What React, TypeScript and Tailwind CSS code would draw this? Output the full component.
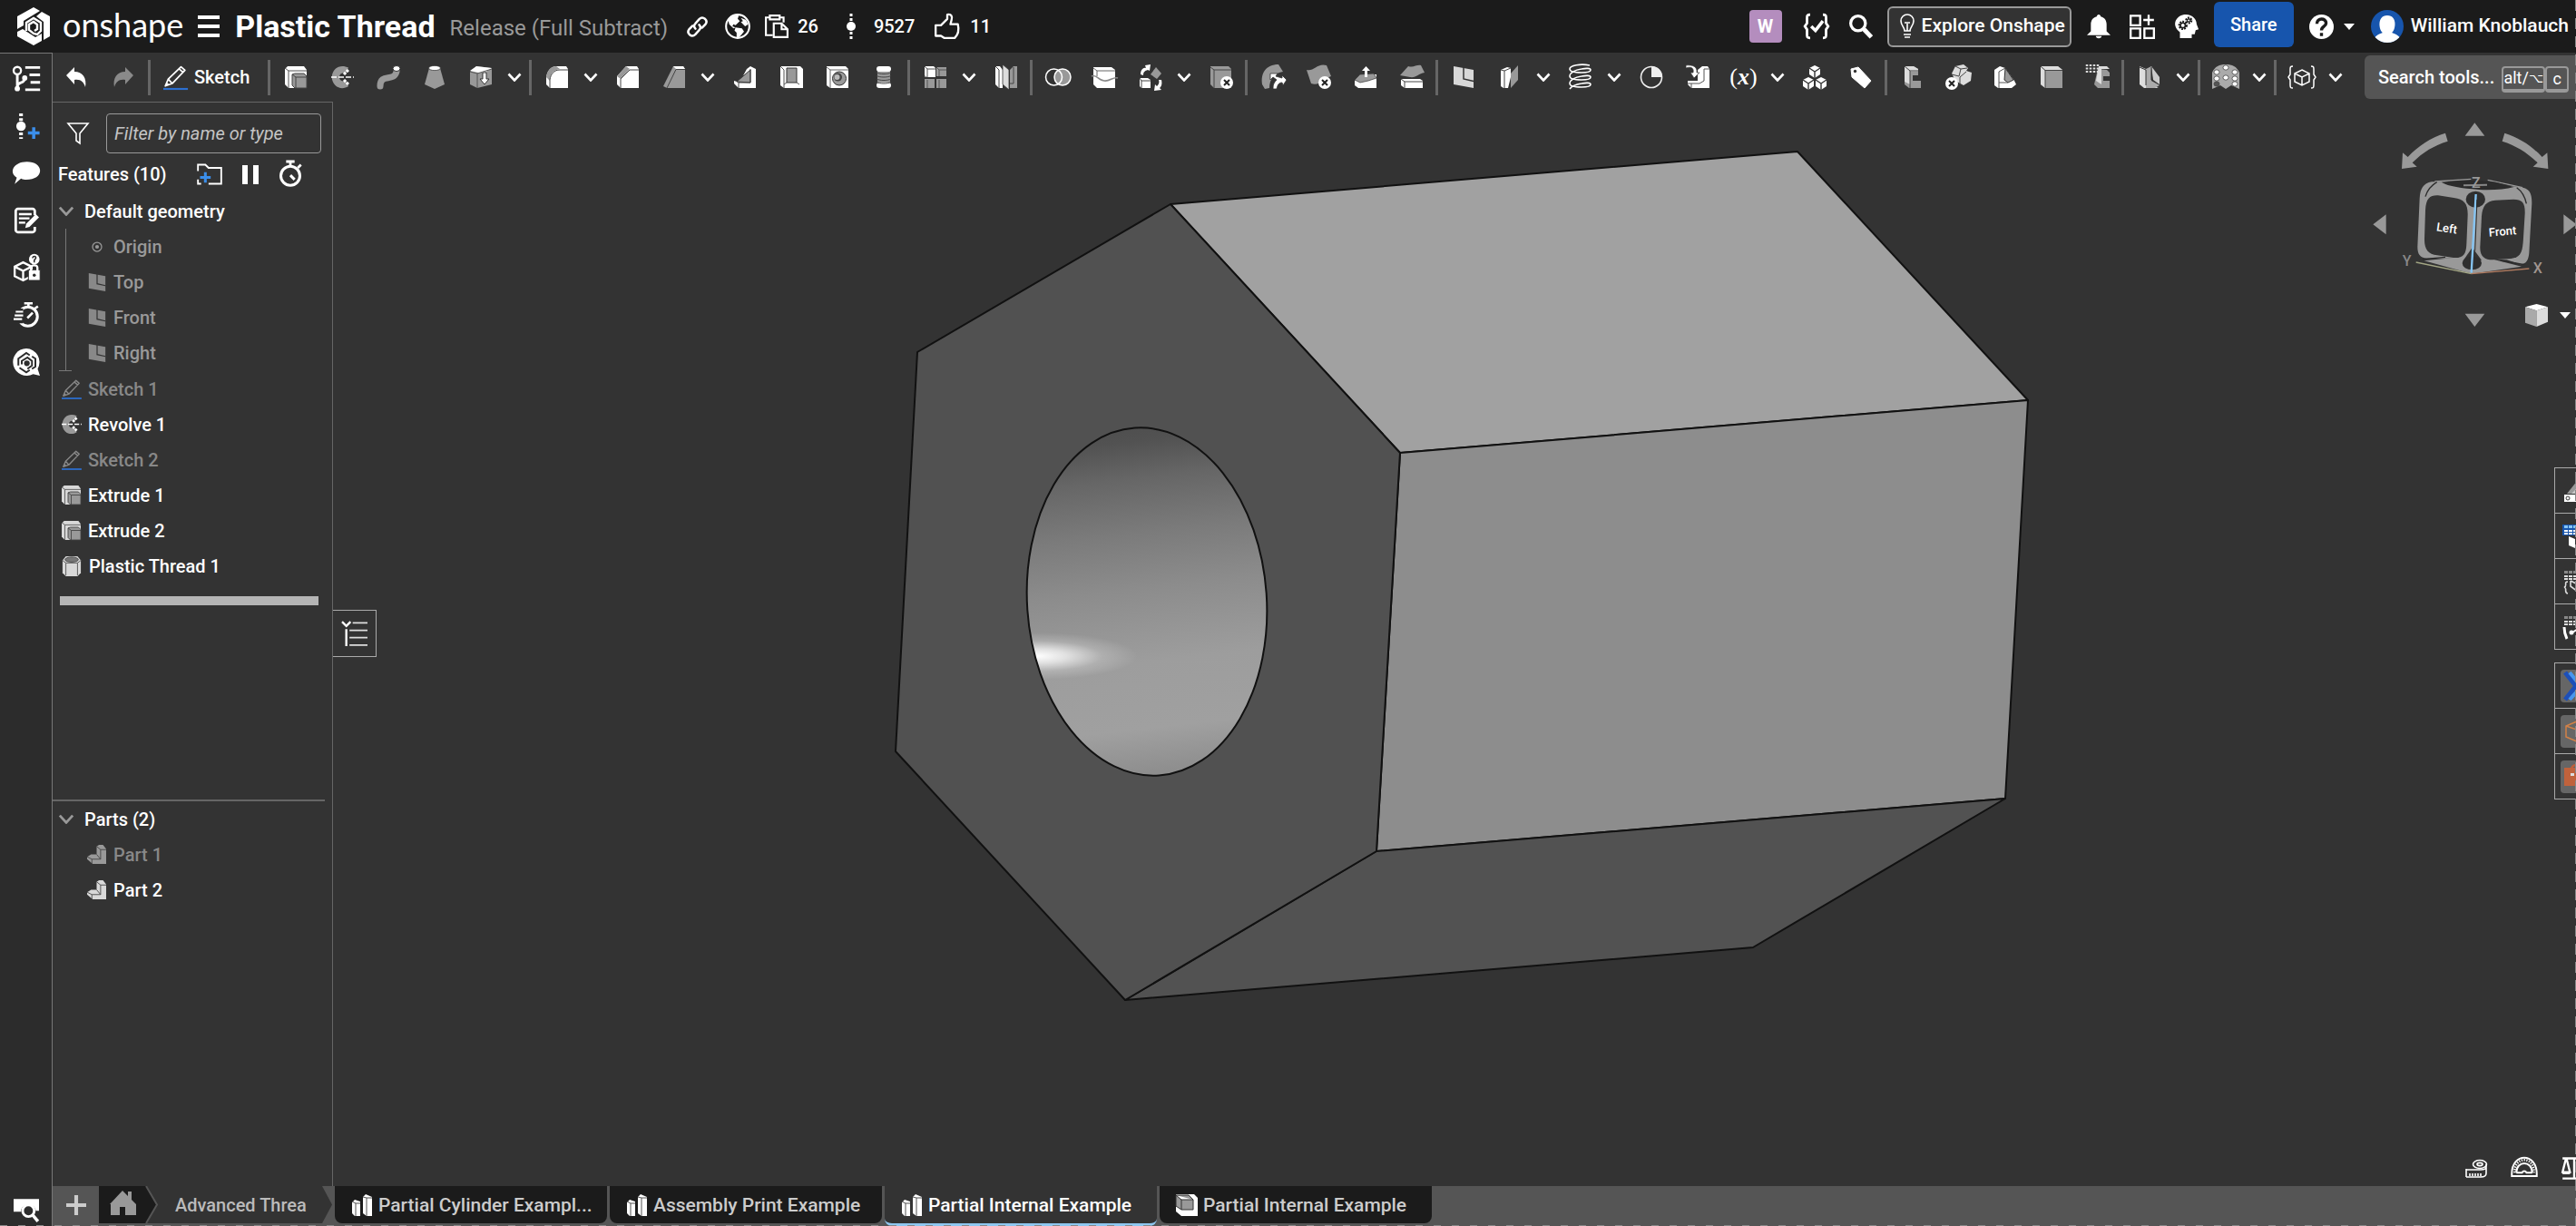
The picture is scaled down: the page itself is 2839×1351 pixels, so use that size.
import { useState } from 'react';
import type { ReactNode } from 'react';

type Tool = { label: string; icon: ReactNode; menu?: boolean };
type FeatureItem = { name: string; icon: ReactNode; dim?: boolean };

function Icon({ children, className = 'size-6' }: { children: ReactNode; className?: string }) {
  return (
    <svg viewBox="0 0 24 24" fill="none" aria-hidden="true" className={`shrink-0 overflow-visible ${className}`}>
      {children}
    </svg>
  );
}

const Extrude = ({ face = '#fff', className }: { face?: string; className?: string }) => (
  <Icon className={className}>
    <path d="M0 3L3 0h18l3 4v20H4l-4-4z" fill={face} />
    <path d="M0 2l4 3h20M4 5v19" stroke="#555" />
    <path d="M8 9l3-1h10l3 3v13H11l-3-3z" fill="#999" stroke="#444" />
    <path d="M8 9l4 3h12M12 12v12" stroke="#444" />
  </Icon>
);

const Revolve = ({ className }: { className?: string }) => (
  <Icon className={className}>
    <path d="M19 1.500C14-1 8-.5 4.500 3-.5 8-.5 16 4.500 21c4 4 10 4 14.500 1l-3.500-6.500c-2 1.500-4 1-5.500-.5-1.500-1.700-1.500-4.300 0-6 1.500-1.500 3.500-2 5.500-.5z" fill="#999" />
    <path d="M14 9l5-5M14 15l5 5" stroke="#fff" strokeWidth="3" strokeDasharray="3 1" />
    <path d="M0 12h25" stroke="#fff" strokeWidth="1.500" strokeDasharray="6 2" />
  </Icon>
);

const Pencil = ({ color = '#fff', className }: { color?: string; className?: string }) => (
  <Icon className={className}>
    <path d="M2 21L5 14 18 1.500l4 3.500L9 18.500zM5 14l4 4.500M16 3.500L20 7M2 21l3-2.500" stroke={color} strokeWidth="1.600" strokeLinejoin="round" />
    <path d="M0 24h25" stroke="#2c6fd0" strokeWidth="2" />
  </Icon>
);

const PlaneIcon = ({ color, className }: { color: string; className?: string }) => (
  <Icon className={className}>
    <path d="M1 0l22 4v20L1 20z" fill={color} />
    <path d="M12 1v13l11 2.500" stroke="#333" strokeWidth="1.500" />
  </Icon>
);

const PartIcon = ({ color }: { color: string }) => (
  <Icon className="size-[21px]">
    <path d="M0 15l5-3h7V2l3-2h5l4 5v19H7l-7-6z" fill={color} />
    <path d="M0 15l6 3h11V6l-5-4M6 18v6M17 6h7M12 12l5 6" stroke="#444" />
  </Icon>
);

const ThreadFeature = () => (
  <Icon className="size-[22px]">
    <path d="M1 5l4-5h14l4 5v15l-4 4H5l-4-4z" fill="#d8d8d8" />
    <ellipse cx="12" cy="4" rx="8" ry="3" fill="#777" stroke="#444" />
    <path d="M5 8v15M19 8v15M1 5l4 3h14l4-3" stroke="#555" />
  </Icon>
);

const Chevron = ({ className = 'w-4 h-3', color = '#fff' }: { className?: string; color?: string }) => (
  <svg viewBox="0 0 16 10" fill="none" aria-hidden="true" className={`shrink-0 ${className}`}>
    <path d="M1.500 1.500L8 8.500l6.500-7" stroke={color} strokeWidth="2.600" />
  </svg>
);

const crossBadge = (x: number, y: number) => (
  <g>
    <circle cx={x} cy={y} r="7" fill="#fff" />
    <path d={`M${x - 3} ${y - 3}l6 6m0-6l-6 6`} stroke="#222" strokeWidth="2" />
  </g>
);

const cube = (x: number, y: number, s: number, key?: number) => (
  <g key={key} transform={`translate(${x} ${y}) scale(${s})`}>
    <path d="M6 0l6 3v7l-6 4-6-4V3z" fill="#fff" />
    <path d="M0 3l6 4 6-4M6 7v7" stroke="#333" strokeWidth="1.400" />
  </g>
);

const GROUPS: Tool[][] = [
  [
    { label: 'Extrude', icon: <Extrude /> },
    { label: 'Revolve', icon: <Revolve /> },
    {
      label: 'Sweep',
      icon: (
        <Icon>
          <path d="M3 22C3 7 18 18 21 6" stroke="#999" strokeWidth="7" strokeLinecap="round" />
          <ellipse cx="21" cy="2.500" rx="4" ry="3" fill="#fff" stroke="#333" />
        </Icon>
      ),
    },
    {
      label: 'Loft',
      icon: (
        <Icon>
          <path d="M6 2h12l5 18-11 5-11-5z" fill="#999" />
          <ellipse cx="12" cy="2" rx="6.500" ry="2.600" fill="#fff" stroke="#333" strokeWidth=".7" />
        </Icon>
      ),
    },
    {
      label: 'Thicken',
      icon: (
        <Icon>
          <path d="M0 6l7-6 17 2v18L8 24l-8-4z" fill="#999" />
          <path d="M0 5l7-5 17 2-8 5H9z" fill="#fff" />
          <path d="M0 6l8 2 16-5M8 8v16" stroke="#555" />
          <path d="M14 7v7h-3l5 6 5-6h-3V7z" fill="#fff" stroke="#333" />
        </Icon>
      ),
      menu: true,
    },
  ],
  [
    {
      label: 'Fillet',
      icon: (
        <Icon>
          <path d="M0 12C1 5 5 0 11 0h11l2 3v21H4l-4-4z" fill="#fff" />
          <path d="M0 12C1 5 5 0 11 0l4 3C8 4 4 8 4 16z" fill="#999" />
          <path d="M4 24v-9C5 8 9 4 15 4h9" stroke="#444" />
        </Icon>
      ),
      menu: true,
    },
    {
      label: 'Chamfer',
      icon: (
        <Icon>
          <path d="M0 11L10 0h12l2 3v21H4l-4-4z" fill="#fff" />
          <path d="M0 11L10 0l4 3L4 14z" fill="#999" />
          <path d="M4 24V14L14 4h10" stroke="#444" />
        </Icon>
      ),
    },
    {
      label: 'Draft',
      icon: (
        <Icon>
          <path d="M0 22L11 0h11l2 3v21H4z" fill="#999" />
          <path d="M11 0h11l2 3H14z" fill="#fff" />
          <path d="M4 24L14 3.500h10" stroke="#444" />
        </Icon>
      ),
      menu: true,
    },
    {
      label: 'Rib',
      icon: (
        <Icon>
          <path d="M14 3l4-3 6 3v21H5l-5-5v-3l6 2z" fill="#fff" />
          <path d="M3 17L18 4v14z" fill="#999" stroke="#333" />
          <path d="M18 3v15H5v6" stroke="#444" />
        </Icon>
      ),
    },
    {
      label: 'Shell',
      icon: (
        <Icon>
          <path d="M0 0h22l3 3v21H4l-4-3z" fill="#fff" />
          <path d="M7 2h11v16H7z" fill="#999" stroke="#333" />
          <path d="M0 0l4 4v20M18 18l3 2M7 18l-3 2" stroke="#555" />
        </Icon>
      ),
    },
    {
      label: 'Hole',
      icon: (
        <Icon>
          <path d="M0 0h21l3 3v21H4l-4-3z" fill="#fff" />
          <path d="M0 1l4 3h20M4 4v20" stroke="#666" />
          <circle cx="14" cy="13.500" r="7.500" fill="#999" stroke="#333" />
          <circle cx="12.500" cy="12" r="4.500" fill="#444" />
          <circle cx="11.500" cy="12" r="3" fill="#bbb" />
        </Icon>
      ),
    },
    {
      label: 'External thread',
      icon: (
        <Icon>
          <path d="M5 5h14v14H5z" fill="#999" />
          <rect x="4" width="16" height="6" rx="3" fill="#fff" />
          <rect x="4" y="18" width="16" height="6" rx="3" fill="#fff" />
          <path d="M4 7c4 2 12 2 16 0M4 10.500c4 2 12 2 16 0M4 14c4 2 12 2 16 0M4 17.500c4 2 12 2 16 0" stroke="#444" />
        </Icon>
      ),
    },
  ],
  [
    {
      label: 'Linear pattern',
      icon: (
        <Icon>
          <path d="M0 1h11v11H0zM13 1h11v10H13zM0 14h11v10H0zM13 14h11v10H13z" fill="#999" />
          <path d="M0 0h10l2 2v10H3L0 10z" fill="#fff" />
          <path d="M0 0l3 3h9M3 3v9M13 1l3 3h8M16 4v7M3 15v9M16 15v9" stroke="#555" />
        </Icon>
      ),
      menu: true,
    },
    {
      label: 'Mirror',
      icon: (
        <Icon>
          <path d="M0 0h5l3 4v20H4l-4-4z" fill="#fff" />
          <path d="M16 4l4-4h4v24h-8z" fill="#999" />
          <path d="M8-2l7 6v22l-7-6z" fill="#ddd" stroke="#333" strokeWidth=".8" />
          <path d="M0 0l4 4v20M20 1v18h-4" stroke="#444" />
        </Icon>
      ),
    },
  ],
  [
    {
      label: 'Boolean',
      icon: (
        <Icon>
          <circle cx="17" cy="12" r="9" fill="#999" />
          <circle cx="7.500" cy="12" r="9" stroke="#fff" strokeWidth="1.500" />
          <circle cx="17" cy="12" r="9" stroke="#fff" strokeWidth="1.500" />
        </Icon>
      ),
    },
    {
      label: 'Split',
      icon: (
        <Icon>
          <path d="M0 1h20l4 3v20H4l-4-4z" fill="#fff" />
          <path d="M0 2l4 3h20M4 5v6" stroke="#666" />
          <path d="M-2 11c5-3 8 5 14 5 6 1 10-5 15-3" stroke="#888" strokeWidth="1.600" />
        </Icon>
      ),
    },
    {
      label: 'Transform',
      icon: (
        <Icon>
          <path d="M0 13h9l3 2v9H2l-2-2z" fill="#fff" />
          <path d="M0 13l2 3h10M2 16v8" stroke="#444" />
          <path d="M18 1l6 7-5 6-7-5z" fill="#999" />
          <path d="M1 9C1 4 4 1 7 2l-1-3 6-1-1 7-2-1C6 5 4 6 4 10zM24 15c1 5 0 7-2 9l2 2-8 1 1-7 2 2c2-2 3-4 2-7z" fill="#fff" />
        </Icon>
      ),
      menu: true,
    },
    {
      label: 'Delete part',
      icon: (
        <Icon>
          <path d="M0 0h20l3 3v21H4l-4-4z" fill="#999" />
          <path d="M0 1l4 3h19M4 4v20" stroke="#444" />
          {crossBadge(18, 18)}
        </Icon>
      ),
    },
  ],
  [
    {
      label: 'Modify fillet',
      icon: (
        <Icon>
          <path d="M0 20C-2 8 4-2 18-2l5 8C14 7 8 14 8 24l-5 1z" fill="#999" />
          <path d="M9 8h8l-2 3 7 2v-3l5 5-4 6-1-3c-4 0-5 3-6 7h-4c0-5 1-7 4-10l-4-3-3 3z" fill="#fff" stroke="#333" strokeWidth=".8" />
        </Icon>
      ),
    },
    {
      label: 'Delete face',
      icon: (
        <Icon>
          <path d="M-2 4C6 6 10-4 20-1l5 12C17 14 12 22 3 19z" fill="#999" />
          {crossBadge(18, 18)}
        </Icon>
      ),
    },
    {
      label: 'Move face',
      icon: (
        <Icon>
          <path d="M0 16l6-7h18v15H4l-4-3z" fill="#fff" />
          <path d="M0 15l6-6 15-1 3 5-9 3-9 2z" fill="#999" stroke="#333" strokeWidth=".7" />
          <path d="M11 12V5H8l4.500-5L17 5h-3v7z" fill="#fff" />
        </Icon>
      ),
    },
    {
      label: 'Replace face',
      icon: (
        <Icon>
          <path d="M-1 10L8 0c6 2 9-2 14-1l4 8c-7 1-9 6-16 5z" fill="#999" />
          <path d="M0 14h21l3 2v8H4l-4-3z" fill="#fff" />
          <path d="M0 14l4 3h20M4 17v7" stroke="#444" />
        </Icon>
      ),
    },
  ],
  [
    { label: 'Plane', icon: <PlaneIcon color="#d8d8d8" /> },
    {
      label: 'Frame',
      icon: (
        <Icon>
          <path d="M2 4l7-3 4 1v10l-3 12H5l-3-2z" fill="#fff" />
          <path d="M2 4l4 1v19M6 5l7-3" stroke="#444" />
          <path d="M13 8l8-9v16l-8 9z" fill="#999" />
        </Icon>
      ),
      menu: true,
    },
    {
      label: 'Helix',
      icon: (
        <Icon>
          <path
            d="M22-1C12-3 0-1 0 3c0 3 6 4 13 4s10-1 10-3-5-2-10-1C6 4 0 7 0 11c0 3 6 4 13 4s10-1 10-3-5-2-10-1C6 12 0 15 0 19c0 3 6 4 13 4s10-1 10-3-5-2-10-1C7 20 2 22 0 25"
            stroke="#fff"
            strokeWidth="1.600"
          />
        </Icon>
      ),
      menu: true,
    },
    {
      label: 'Curve',
      icon: (
        <Icon>
          <circle cx="12" cy="12" r="11.500" stroke="#eee" strokeWidth="1.600" />
          <path d="M12 0v12h12C24 5 19 0 12 0z" fill="#eee" />
        </Icon>
      ),
    },
    {
      label: 'Import',
      icon: (
        <Icon>
          <path d="M12 4l5-4h6l2 3v21H5l-4-4v-4h11z" fill="#fff" />
          <path d="M25 3h-6v13l-5 3H1M5 24v-5" stroke="#555" />
          <path d="M-1-1c8-1 13 2 12 8h3l-6 6-4-6h3C8 2 5 0-1 2z" fill="#fff" stroke="#333" strokeWidth=".7" />
        </Icon>
      ),
    },
    {
      label: 'Variable',
      icon: (
        <span className="font-[Liberation_Serif,serif] text-[26px] leading-6 text-white">
          (<span className="font-bold italic">x</span>)
        </span>
      ),
      menu: true,
    },
    {
      label: 'Composite part',
      icon: (
        <Icon>
          {cube(6, -1, 1)}
          {cube(-1, 12, 1, 1)}
          {cube(13, 12, 1, 2)}
        </Icon>
      ),
    },
    {
      label: 'Tag',
      icon: (
        <Icon>
          <path d="M1 3l8-2 14 15-7 8L2 12z" fill="#fff" stroke="#fff" strokeLinejoin="round" />
          <circle cx="5.500" cy="5.500" r="1.700" fill="#333" />
        </Icon>
      ),
    },
  ],
  [
    {
      label: 'Sheet metal model',
      icon: (
        <Icon>
          <path d="M3 0h10l5 3v7h-6v6h9v8H8l-5-4z" fill="#999" />
          <path d="M3 0h10l5 3v3H9v14l-6-3z" fill="#ddd" />
          <path d="M3 0l6 5h9M9 5v19" stroke="#444" />
        </Icon>
      ),
    },
    {
      label: 'Delete bend',
      icon: (
        <Icon>
          <path d="M4 8l4-8 9-2 5 4-2 3 6 2-1 9-8 5-9-5z" fill="#ddd" />
          <path d="M8 0l6 3-2 8-8-2M14 3l7-1M20 6l-7 6v8" stroke="#444" />
          {crossBadge(4, 19)}
        </Icon>
      ),
    },
    {
      label: 'Flange',
      icon: (
        <Icon>
          <path d="M0 4l6-4 6 2 10 14 2 4-5 4H4l-4-3z" fill="#fff" />
          <path d="M12 2l9 13-6 3-4-3z" fill="#999" stroke="#333" />
          <path d="M5 24V6L12 2M5 18h10" stroke="#555" />
        </Icon>
      ),
    },
    {
      label: 'Finish sheet metal',
      icon: (
        <Icon>
          <path d="M0 0h19l5 4v20H5l-5-4z" fill="#999" />
          <path d="M0 0h19l5 4H5v20l-5-4z" fill="#ddd" />
          <path d="M0 0l5 4.500h19M5 4v20" stroke="#444" />
        </Icon>
      ),
    },
    {
      label: 'Flat pattern',
      icon: (
        <Icon>
          <path d="M12 3l10 1 3 3v4h-7v5h7v8H12l-4-4z" fill="#999" />
          <path d="M13 0h9l3 3h-9v17l-6-4z" fill="#ddd" />
          <path d="M0-2v10M4-2v10M8-2v10M12-2v10" stroke="#ddd" strokeWidth="2.500" strokeDasharray="2 1.500" />
        </Icon>
      ),
    },
  ],
  [
    {
      label: 'Bend relief',
      icon: (
        <Icon>
          <path d="M1 0l7 3v15l14 6H6l-5-4z" fill="#ddd" />
          <path d="M8 3l6-3v16l9 5-5 3H8z" fill="#aaa" />
          <path d="M14 0l9 12v8l-7-5z" fill="#ccc" />
          <path d="M1 1l7 3v17M14 1v14" stroke="#333" />
        </Icon>
      ),
      menu: true,
    },
  ],
  [
    {
      label: 'Lattice',
      icon: (
        <Icon>
          <path d="M-3 7C0 0 5-2 12-2s12 2 15 9v18l-9-4-6 4-6-4-9 4z" fill="#aaa" />
          {[-1, 9, 19].map((x, i) => (
            <g key={x} fill="#fff" stroke="#444" strokeWidth=".8">
              <rect x={x} y={i === 1 ? -1 : 4} width="6" height="5" rx="2.500" />
              <rect x={x} y={i === 1 ? 10 : 11} width="6" height="5" rx="2.500" />
              {i !== 1 && <rect x={x} y="17" width="6" height="5" rx="2.500" fill={i === 0 ? '#555' : '#fff'} />}
            </g>
          ))}
        </Icon>
      ),
      menu: true,
    },
  ],
  [
    {
      label: 'Custom feature',
      icon: (
        <Icon>
          <path d="M2 0C-1 0-1 1-1 4v5l-2 3 2 3v5c0 3 0 4 3 4M22 0c3 0 3 1 3 4v5l2 3-2 3v5c0 3 0 4-3 4M12 4l8 4v9l-8 4-8-4V8zM4 8l8 4 8-4M12 12v9" stroke="#fff" strokeWidth="1.500" />
        </Icon>
      ),
      menu: true,
    },
  ],
];

const GEOMETRY = ['Origin', 'Top', 'Front', 'Right'];

const FEATURES: FeatureItem[] = [
  { name: 'Sketch 1', icon: <Pencil color="#888" className="size-[21px]" />, dim: true },
  { name: 'Revolve 1', icon: <Revolve className="size-[21px]" /> },
  { name: 'Sketch 2', icon: <Pencil color="#888" className="size-[21px]" />, dim: true },
  { name: 'Extrude 1', icon: <Extrude face="#d8d8d8" className="size-[21px]" /> },
  { name: 'Extrude 2', icon: <Extrude face="#d8d8d8" className="size-[21px]" /> },
  { name: 'Plastic Thread 1', icon: <ThreadFeature /> },
];

const TABS = [
  { name: 'Partial Cylinder Exampl...', kind: 'studio' },
  { name: 'Assembly Print Example', kind: 'studio' },
  { name: 'Partial Internal Example', kind: 'studio' },
  { name: 'Partial Internal Example', kind: 'drawing' },
];

function Logo() {
  return (
    <svg viewBox="0 0 36 42" className="w-9 h-[42px]" fill="none" aria-hidden="true">
      <path d="M0 24V10L18 0l7 4L7 15v5zM27 5l9 5v22l-7 4V16l-8-6zM0 27l6-3 14 9 7-4v8l-9 5L0 32z" fill="#fff" />
      <path d="M10 26V17l8-5 8 5v9l-4 4-4-1-5-4v-6l5-3 4 3v5l-3 2" stroke="#fff" strokeWidth="2.400" />
    </svg>
  );
}

function VersionDots() {
  return (
    <svg viewBox="0 0 10 28" className="w-[10px] h-7" aria-hidden="true">
      <path d="M5 0v28" stroke="#fff" strokeWidth="3" strokeDasharray="3 2" />
      <circle cx="5" cy="14" r="5" fill="#fff" />
    </svg>
  );
}

function Header() {
  return (
    <header className="flex h-[58px] shrink-0 items-center bg-[#1b1b1b] pl-[19px] pr-2 text-white">
      <Logo />
      <span className="ml-[14px] -mt-1 font-[Lato,sans-serif] text-[36px] leading-10">onshape</span>
      <button aria-label="Main menu" className="ml-4 flex w-6 flex-col gap-[6px] py-2">
        <span className="h-1 bg-white" />
        <span className="h-1 bg-white" />
        <span className="h-1 bg-white" />
      </button>
      <h1 className="ml-[17px] text-[34px] leading-10 font-bold">Plastic Thread</h1>
      <span className="ml-4 mt-1 text-[24px] leading-8 text-[#999]">Release (Full Subtract)</span>
      <button aria-label="Copy link" className="ml-[20px]">
        <Icon className="size-[25px]">
          <g stroke="#fff" strokeWidth="2.400" strokeLinecap="round">
            <path d="M10 14c-2-2-1.500-4 0-5.500l4-4.500c4-4 10 1 6.500 5.500L17 13" />
            <path d="M14 10c2 2 1.500 4 0 5.500L10 20c-4 4-10-1-6.500-5.500L7 11" />
          </g>
        </Icon>
      </button>
      <button aria-label="Public document" className="ml-[18px]">
        <Icon className="size-7">
          <circle cx="12" cy="12" r="11" stroke="#fff" strokeWidth="1.800" />
          <path d="M3 6c3-4 7-5 10-4l-1 3 2 2-4 4-2-1-1 2 3 1-2 1-4-4zM10 13l6 1 2 3-5 6-2-1v-4l-2-2zM15 4l5 2 2 4-3 2-4-4 2-1z" fill="#fff" />
        </Icon>
      </button>
      <button className="ml-4 flex items-center gap-[10px] text-[20px] leading-6 font-medium">
        <Icon className="size-[26px]">
          <path d="M8 21H1V3h4M15 3h4v5M5 1h10v4H5z" stroke="#fff" strokeWidth="2" />
          <path d="M9 9h8l6 6v8H9zM17 9v6h6" stroke="#fff" strokeWidth="2" />
        </Icon>
        26
      </button>
      <button className="ml-[31px] flex items-center gap-[20px] text-[20px] leading-6 font-medium">
        <VersionDots />
        9527
      </button>
      <button className="ml-[22px] flex items-center gap-[11px] text-[20px] leading-6 font-medium">
        <Icon className="size-7">
          <path d="M1 11h5l6-6V1c4-1 5 2 4 5l-1 4h7c1 4 1 9-3 13H9l-3-2H1z" stroke="#fff" strokeWidth="2" strokeLinejoin="round" />
        </Icon>
        11
      </button>

      <div className="ml-auto flex items-center">
        <span className="flex size-9 items-center justify-center rounded-sm bg-[#b48dbe] text-[20px] font-bold">W</span>
        <button aria-label="Release management" className="ml-6">
          <Icon className="size-7">
            <path d="M6 1C3 1 3 2 3 4v5l-2 3 2 3v5c0 2 0 3 3 3M18 1c3 0 3 1 3 3v5l2 3-2 3v5c0 2 0 3-3 3" stroke="#fff" strokeWidth="2.400" />
            <path d="M7 12l4 4 7-9" stroke="#fff" strokeWidth="3" />
          </Icon>
        </button>
        <button aria-label="Search" className="ml-[22px]">
          <Icon className="size-[26px]">
            <circle cx="9" cy="9" r="7.500" stroke="#fff" strokeWidth="3" />
            <path d="M15 15l7.500 8" stroke="#fff" strokeWidth="4.500" />
          </Icon>
        </button>
        <button className="ml-4 flex h-[45px] items-center gap-2 rounded-md border-2 border-[#999] bg-[#333] pl-3 pr-[5px] text-[21px] font-medium">
          <svg viewBox="0 0 16 28" className="w-4 h-7" fill="none" aria-hidden="true">
            <path d="M5 19c0-4-4-6-4-11a7 7 0 0114 0c0 5-4 7-4 11zM8 19v-8M5 10h6M4 23h8M5 26h6" stroke="#fff" strokeWidth="1.600" />
          </svg>
          Explore Onshape
        </button>
        <button aria-label="Notifications" className="ml-[17px]">
          <Icon className="size-[26px]">
            <path d="M12 0c1 0 2 1 2 2 4 1 6 4 6 8v7l4 4H0l4-4v-7c0-4 2-7 6-8 0-1 1-2 2-2zM9 22h6c0 3-6 3-6 0z" fill="#fff" />
          </Icon>
        </button>
        <button aria-label="App store" className="ml-[21px]">
          <Icon className="size-[28px]">
            <path d="M1 2h9v9H1zM1 14h9v9H1zM14 14h9v9h-9zM18 1v10M13 6h10" stroke="#fff" strokeWidth="2" />
          </Icon>
        </button>
        <button aria-label="Learning center" className="ml-[21px]">
          <Icon className="size-[26px]">
            <path d="M12 0c7 0 11 5 11 10l2 5-3 1-1 4h-3v4H6v-6C-4 10 3 0 12 0z" fill="#fff" />
            <g stroke="#1b1b1b" strokeWidth="2.500" strokeDasharray="1.600 1">
              <circle cx="9" cy="11" r="3.500" />
              <circle cx="15" cy="6" r="2.500" />
            </g>
            <circle cx="9" cy="11" r="2.500" stroke="#1b1b1b" strokeWidth="1.500" />
            <circle cx="15" cy="6" r="1.500" stroke="#1b1b1b" />
          </Icon>
        </button>
        <button className="mb-1 ml-[18px] h-[50px] w-[88px] rounded-md bg-[#1755ad] text-[20px] font-medium">Share</button>
        <button aria-label="Help" className="ml-[17px] flex items-center gap-[11px]">
          <Icon className="size-[27px]">
            <circle cx="12" cy="12" r="12" fill="#fff" />
            <path d="M7.500 9c0-6 9-6 9-.5 0 3.500-4.500 3-4.500 7M12 18v3" stroke="#1b1b1b" strokeWidth="3" />
          </Icon>
          <svg viewBox="0 0 12 7" className="w-3 h-[7px]" aria-hidden="true"><path d="M0 0h12L6 7z" fill="#fff" /></svg>
        </button>
        <button className="ml-[18px] flex items-center gap-2 text-[21px] font-medium">
          <span className="size-9 overflow-hidden rounded-full bg-[#1755ad]">
            <svg viewBox="0 0 36 36" aria-hidden="true">
              <path d="M18 6c12 0 9 17 5 19 5 2 11 4 10 11H3c-1-7 5-9 10-11C9 23 6 6 18 6z" fill="#fff" />
            </svg>
          </span>
          William Knoblauch
        </button>
      </div>
    </header>
  );
}

function Toolbar() {
  return (
    <div role="toolbar" className="flex h-[54px] shrink-0 items-center bg-[#333]">
      <button aria-label="Undo" className="flex w-[51px] justify-center">
        <Icon>
          <path d="M1 10l9-9v5c9 0 14 7 12 17-2-6-5-9-12-8v5z" fill="#fff" />
        </Icon>
      </button>
      <button aria-label="Redo" className="flex w-[54px] justify-center">
        <Icon>
          <path d="M23 10l-9-9v5C5 6 0 13 2 23c2-6 5-9 12-8v5z" fill="#8a8a8a" />
        </Icon>
      </button>
      <span className="mr-[2px] h-[39px] w-[3px] shrink-0 bg-[#666]" />
      <button className="flex w-[126px] items-center gap-2 pl-3 text-[20px] font-medium text-white">
        <Pencil className="size-[26px]" />
        Sketch
      </button>
      {GROUPS.map((group, g) => (
        <div key={g} className="flex items-center">
          <span className="mx-[1px] mr-[2px] h-[39px] w-[3px] shrink-0 bg-[#666]" />
          {group.map((tool) => (
            <div key={tool.label} className="flex items-center">
              <button aria-label={tool.label} className="flex w-[51px] justify-center">{tool.icon}</button>
              {tool.menu && (
                <button aria-label={`${tool.label} menu`} className="flex h-6 w-[27px] items-center justify-center pr-1">
                  <Chevron className="w-4 h-[10px]" />
                </button>
              )}
            </div>
          ))}
        </div>
      ))}
      <button className="ml-auto flex h-12 w-[233px] shrink-0 items-center rounded-l-md bg-[#555] pl-[15px] text-[20px] font-medium text-white">
        <span>Search tools...</span>
        <span className="ml-2 mt-1 flex text-[18px] leading-6 font-normal">
          <kbd className="flex h-[29px] w-12 items-center justify-center rounded-sm border-2 border-b-4 border-[#999] font-[Roboto,DejaVu_Sans,sans-serif]">
            alt/<span className="text-[14px]">⌥</span>
          </kbd>
          <kbd className="h-[29px] w-[26px] rounded-sm border-2 border-b-4 border-[#999] text-center font-[Roboto,sans-serif]">c</kbd>
        </span>
      </button>
    </div>
  );
}

const stopwatch = (
  <>
    <circle cx="12" cy="13.500" r="9" stroke="#fff" strokeWidth="2.600" />
    <path d="M12 4V1M8 0h8M19 6l3-3" stroke="#fff" strokeWidth="2.400" />
  </>
);

const RAIL: { label: string; icon: ReactNode }[] = [
  {
    label: 'Feature list',
    icon: (
      <Icon className="size-7">
        <circle cx="3.500" cy="5" r="3.500" stroke="#fff" strokeWidth="2" />
        <path d="M3.500 9v12M3.500 20c0-5 7-2 7-8" stroke="#fff" strokeWidth="2.500" />
        <circle cx="3.500" cy="22" r="2.500" fill="#fff" />
        <circle cx="10.500" cy="12" r="2.500" fill="#fff" />
        <path d="M11 2h14M15 9h10M16 16h9M11 23h14" stroke="#fff" strokeWidth="2.500" />
      </Icon>
    ),
  },
  {
    label: 'Versions and history',
    icon: (
      <Icon className="size-7">
        <path d="M7 0v24" stroke="#fff" strokeWidth="3.500" strokeDasharray="2.500 2" />
        <circle cx="7" cy="12" r="4.500" fill="#fff" />
        <path d="M19 13v11M13.500 18.500h11" stroke="#3b8eea" strokeWidth="3" />
      </Icon>
    ),
  },
  {
    label: 'Comments',
    icon: (
      <Icon className="size-7">
        <path d="M12.500 1C20 1 25 4.500 25 9.500S20 18 12 18c-2 0-3 0-5-1l-6 5 2-6c-8-5-3-15 9.500-15z" fill="#fff" />
      </Icon>
    ),
  },
  {
    label: 'Notes',
    icon: (
      <Icon className="size-7">
        <path d="M20 7V3c0-1-1-2-2-2H4C3 1 2 2 2 3v18c0 1 1 2 2 2h14c1 0 2-1 2-2v-3" stroke="#fff" strokeWidth="2.400" />
        <path d="M5 6h12M5 10h10M5 14h6" stroke="#fff" strokeWidth="2" />
        <path d="M11 19l1-4L21 6l3 3-9 9z" fill="#fff" />
      </Icon>
    ),
  },
  {
    label: 'Permissions',
    icon: (
      <Icon className="size-7">
        <path d="M1 11l8-4 8 4v9l-8 4-8-4zM1 11l8 4 8-4M9 15v9" stroke="#fff" strokeWidth="2" />
        <circle cx="19.500" cy="4" r="5" fill="#fff" />
        <path d="M18 3c0-2.500 3.500-2 3 0l-1.500 2v2" stroke="#2c2c2c" strokeWidth="1.300" />
        <path d="M14 14h11v10H14z" fill="#fff" stroke="#2c2c2c" strokeWidth=".8" />
        <path d="M16.500 15v-3c0-3 6-3 6 0v3" stroke="#fff" strokeWidth="2" />
        <circle cx="19.500" cy="19" r="1.500" fill="#2c2c2c" />
      </Icon>
    ),
  },
  {
    label: 'Performance',
    icon: (
      <Icon className="size-7">
        <circle cx="13.500" cy="13.500" r="9" stroke="#fff" strokeWidth="2.600" />
        <path d="M-1 8h10M0 11.500h8M-1 15h8M0 18h9" stroke="#2c2c2c" strokeWidth="4" />
        <path d="M2 9h7M1 12.500h8M0 16h8" stroke="#fff" strokeWidth="1.800" />
        <path d="M10 1h8M14 1v3M20 6l3-2M13 15l5-5" stroke="#fff" strokeWidth="2.200" />
      </Icon>
    ),
  },
  {
    label: 'Onshape chat',
    icon: (
      <Icon className="size-[30px]">
        <path d="M12 0a12 12 0 0110 18l2 6-6-1.500A12 12 0 1112 0z" fill="#fff" />
        <path d="M5 15V9l7-5 3 2M17 7l3 2v7l-3 2M6 17l6 4 3-2M8 14v-3l5-3 4 3v4l-4 3" stroke="#2c2c2c" strokeWidth="1.600" />
        <circle cx="12.500" cy="13" r="2.500" fill="#2c2c2c" />
      </Icon>
    ),
  },
];

function Rail() {
  return (
    <nav aria-label="Panels" className="flex w-[58px] shrink-0 flex-col items-center border-t border-r border-[#777] bg-[#2c2c2c]">
      {RAIL.map((item, i) => (
        <button
          key={item.label}
          aria-label={item.label}
          className={i === 0 ? 'flex h-[54px] items-center' : 'flex h-[52px] items-center'}
        >
          {item.icon}
        </button>
      ))}
      <button aria-label="Search document" className="mt-auto mb-1">
        <Icon className="size-7">
          <path d="M0 2h24v11h-3c-1-8-14-8-14 1H0z" fill="#fff" />
          <circle cx="14" cy="13" r="5.500" stroke="#fff" strokeWidth="2.500" />
          <path d="M18 17l5 6" stroke="#fff" strokeWidth="3" />
        </Icon>
      </button>
    </nav>
  );
}

function FeatureTree() {
  const [filter, setFilter] = useState('');

  return (
    <aside className="flex w-[309px] shrink-0 flex-col border-t border-r border-[#666] text-[20px] leading-6 font-medium text-white">
      <div className="flex h-[770px] shrink-0 flex-col">
        <div className="mt-3 flex items-center pl-4">
          <Icon className="size-[24px]">
            <path d="M1 1h22l-9 11v11l-4-3v-8z" stroke="#fff" strokeWidth="1.600" />
          </Icon>
          <input
            aria-label="Filter by name or type"
            placeholder="Filter by name or type"
            value={filter}
            onChange={(e) => setFilter(e.target.value)}
            className="ml-[19px] h-11 w-[237px] rounded border border-[#999] bg-transparent px-2 font-normal italic text-white placeholder:text-[#c4c4c4]"
          />
        </div>
        <div className="flex h-11 items-center pl-[6px] pt-[2px]">
          <h2>Features (10)</h2>
          <button aria-label="Add folder" className="ml-auto">
            <Icon className="size-7">
              <path d="M1 9V3h7l3 3h12v15H11M1 17v4h3" stroke="#fff" strokeWidth="1.600" />
              <path d="M8 10v10M3 15h10" stroke="#3b8eea" strokeWidth="2.600" />
            </Icon>
          </button>
          <button aria-label="Suppress" className="ml-[22px] flex gap-[6px]">
            <span className="h-[21px] w-[6px] bg-white" />
            <span className="h-[21px] w-[6px] bg-white" />
          </button>
          <button aria-label="Feature timing" className="mr-8 ml-[21px]">
            <Icon className="size-[28px]">
              {stopwatch}
              <path d="M12 13l4 4" stroke="#fff" strokeWidth="2.600" />
            </Icon>
          </button>
        </div>
        <button className="flex h-[39px] items-center gap-[11px] pl-[6px]">
          <Chevron className="w-[18px] h-[11px]" color="#999" />
          Default geometry
        </button>
        <ul className="ml-[14px] border-l border-[#777] text-[#999]">
          {GEOMETRY.map((name) => (
            <li key={name} className="flex h-[39px] items-center gap-2 pl-6">
              {name === 'Origin' ? (
                <Icon className="size-5">
                  <circle cx="12" cy="12" r="6" stroke="#999" strokeWidth="1.500" />
                  <circle cx="12" cy="12" r="2.500" fill="#999" />
                </Icon>
              ) : (
                <PlaneIcon color="#888" className="size-5" />
              )}
              {name}
            </li>
          ))}
        </ul>
        <span className="ml-[7px] h-px w-[14px] shrink-0 bg-[#777]" />
        <ul>
          {FEATURES.map((f) => (
            <li key={f.name} className={`flex h-[39px] items-center gap-2 pl-[10px] ${f.dim ? 'text-[#888]' : ''}`}>
              {f.icon}
              {f.name}
            </li>
          ))}
        </ul>
        <span className="mt-[14px] mr-[15px] ml-2 h-[10px] bg-[#b5b5b5]" />
      </div>
      <section className="mt-[-2px]">
        <hr className="mr-2 h-[2px] border-0 bg-[#666]" />
        <button className="flex h-[39px] items-center gap-[11px] pl-[6px]">
          <Chevron className="w-[18px] h-[11px]" color="#999" />
          Parts (2)
        </button>
        <ul>
          <li className="flex h-[39px] items-center gap-2 pl-[38px] text-[#888]"><PartIcon color="#999" />Part 1</li>
          <li className="flex h-[39px] items-center gap-2 pl-[38px]"><PartIcon color="#d8d8d8" />Part 2</li>
        </ul>
      </section>
    </aside>
  );
}

function Model() {
  return (
    <svg viewBox="367 112 2472 1195" className="absolute inset-0 size-full" role="img" aria-label="Hexagonal part">
      <defs>
        <linearGradient id="bore" x1="0" y1="0" x2="0.080" y2="1">
          <stop offset="0" stopColor="#4a4a4a" />
          <stop offset=".1" stopColor="#525252" />
          <stop offset=".2" stopColor="#666" />
          <stop offset=".35" stopColor="#7b7b7b" />
          <stop offset=".5" stopColor="#8c8c8c" />
          <stop offset=".7" stopColor="#9d9d9d" />
          <stop offset=".88" stopColor="#a0a0a0" />
          <stop offset="1" stopColor="#8e8e8e" />
        </linearGradient>
        <radialGradient id="glint">
          <stop offset="0" stopColor="#fff" />
          <stop offset=".3" stopColor="#fff" stopOpacity=".7" />
          <stop offset=".65" stopColor="#fff" stopOpacity=".2" />
          <stop offset="1" stopColor="#fff" stopOpacity="0" />
        </radialGradient>
        <clipPath id="boreClip">
          <ellipse cx="1264" cy="663" rx="132" ry="192" transform="rotate(-4 1264 663)" />
        </clipPath>
      </defs>
      <g stroke="#111" strokeWidth="2" strokeLinejoin="round">
        <path d="M1290 225L1981 167 2235 441 1543 499z" fill="#a1a1a1" />
        <path d="M1543 499L2235 441 2210 880 1517 938z" fill="#8d8d8d" />
        <path d="M1517 938L2210 880 1932 1044 1240 1102z" fill="#525252" />
        <path d="M1290 225L1543 499 1517 938 1240 1102 987 828 1011 388z" fill="#515151" />
      </g>
      <g clipPath="url(#boreClip)">
        <rect x="1120" y="460" width="290" height="405" fill="url(#bore)" />
        <ellipse cx="1142" cy="723" rx="112" ry="26" fill="url(#glint)" />
      </g>
      <ellipse cx="1264" cy="663" rx="132" ry="192" transform="rotate(-4 1264 663)" fill="none" stroke="#111" strokeWidth="2" />
    </svg>
  );
}

function ViewCube() {
  return (
    <div className="absolute top-0 right-0 w-[239px]">
      <svg viewBox="0 6 717 804" className="w-full" fill="none" role="img" aria-label="View cube">
        <g fill="#999">
          <path d="M350 119L382 76l33 43zM350 707h65l-33 43zM89 379v66l-43-33zM676 379v66l43-33z" />
          <path d="M285 110l8 27c-45 14-82 35-117 71l15 13-50 7 3-53 17 14c35-37 75-64 124-79zM481 110l-8 27c45 14 82 37 117 71l-15 13 50 7-3-53-17 14c-35-37-75-64-124-79z" />
        </g>
        <path d="M250 270L370 262M425 265L540 290" stroke="#999" strokeWidth="4" />
        <path d="M240 271c-28 5-38 22-40 55l-7 160c0 25 8 35 30 38h100l165 5 45 15c20-2 27-15 29-38l9-165c0-35-8-48-40-53-100-12-200-18-291-17z" fill="#999" />
        <path d="M215 532L345 519h65L537 551 372 575z" fill="#999" />
        <path d="M272 272c60-6 130-8 180 0l60 16c-30 8-70 11-115 9-60-6-100-10-125-25z" fill="#2b2b2b" />
        <path d="M219 365c2-40 15-50 42-49l52 8c35 5 47 20 46 58l-4 95c-1 36-13 47-43 45l-54-8c-30-4-43-20-42-55z" fill="#333" />
        <path d="M405 385c2-35 16-50 45-53l60-3c30 0 39 12 38 47l-6 95c-3 38-12 50-40 54l-60 4c-28 0-43-12-42-43z" fill="#333" />
        <path d="M374 488L345 530H405z" fill="#333" />
        <ellipse cx="385" cy="329" rx="32" ry="27" fill="#2f2f2f" />
        <ellipse cx="373" cy="540" rx="32" ry="22" fill="#2f2f2f" />
        <path d="M219 320c5-18 18-36 38-48M553 343c-4-20-14-40-32-53M210 527l75-7M467 531l80 14" stroke="#2b2b2b" strokeWidth="4" />
        <path d="M386 312L371 572" stroke="#86c5f4" strokeWidth="7" />
        <path d="M390 330L383 500" stroke="#2b2b2b" strokeWidth="3" />
        <path d="M188 537L371 575" stroke="#a3a684" strokeWidth="4" />
        <path d="M371 575L562 558" stroke="#b07b60" strokeWidth="4" />
        <path d="M345 283l78-2" stroke="#888" strokeWidth="6" />
        <g className="font-[Roboto,sans-serif] font-medium" fontSize="48">
          <text x="254" y="433" fill="#fff" fontSize="39" transform="rotate(8 254 433)">Left</text>
          <text x="430" y="452" fill="#fff" fontSize="39" transform="rotate(-5 430 452)">Front</text>
          <text x="372" y="290" fill="#999">Z</text>
          <text x="143" y="549" fill="#888">Y</text>
          <text x="575" y="574" fill="#a09590">X</text>
        </g>
      </svg>
      <button aria-label="View options" className="absolute right-[6px] bottom-5 flex items-center gap-[13px]">
        <Icon className="size-[25px]">
          <path d="M0 3l12-3 12 3-12 4z" fill="#fff" />
          <path d="M0 3l12 4v17L0 20z" fill="#aaa" />
          <path d="M24 3L12 7v17l12-5z" fill="#ddd" />
        </Icon>
        <svg viewBox="0 0 12 7" className="w-3 h-[7px]" aria-hidden="true"><path d="M0 0h12L6 7z" fill="#fff" /></svg>
      </button>
    </div>
  );
}

const gridDots = (top: string, bottom: string) => (
  <g>
    {[0, 5, 10, 15].map((x) => (
      <g key={x}>
        <rect x={x} y="0" width="4" height="3" fill={top} />
        <rect x={x} y="5" width="4" height="2" fill={bottom} />
        <rect x={x} y="8" width="4" height="2" fill={bottom} />
      </g>
    ))}
  </g>
);

const SIDE_TOOLS = [
  <Icon key="mass">
    <path d="M3 15L15 0v15z" fill="#999" />
    <path d="M8 15l7-7v7z" fill="#ccc" />
    <path d="M0 16h24v8H0z" fill="#fff" />
    <circle cx="4" cy="20" r="2" fill="#fff" stroke="#333" />
  </Icon>,
  <Icon key="table">
    <rect x="-2" y="-1" width="22" height="12" fill="#1755ad" />
    {gridDots('#86c5f4', '#fff')}
    <path d="M5 12l7 3v10l-7-3z" fill="#fff" />
  </Icon>,
  <Icon key="custom">
    {gridDots('#888', '#ddd')}
    <path d="M4 12c-5 0 0 5-4 6 4 1-1 6 4 7M7 11v6l8 6M7 11l8 4" stroke="#ddd" strokeWidth="1.600" />
  </Icon>,
  <Icon key="variables">
    {gridDots('#888', '#ddd')}
    <path d="M0 12c0 5 1 9 3 13" stroke="#fff" strokeWidth="3" />
    <circle cx="8" cy="18" r="2.500" fill="#fff" />
    <path d="M9 18l6-4" stroke="#fff" strokeWidth="2" />
  </Icon>,
];

const APP_TOOLS = [
  <Icon key="x">
    <path d="M1-3L13 12 1 27" stroke="#1d4fb8" strokeWidth="5" />
    <path d="M6-3l9 11M6 27l8-9" stroke="#4796ee" strokeWidth="4" />
  </Icon>,
  <Icon key="wire">
    <path d="M14 1L2 6v12l12 5M2 6l12 4" stroke="#d28147" strokeWidth="1.500" />
  </Icon>,
  <Icon key="box">
    <path d="M8 4c0-6 7-5 8-5" stroke="#bf5f3a" strokeWidth="2.500" />
    <path d="M0 2h24v20H0z" fill="#c0623c" />
    <path d="M7 8h4v3H7z" fill="#ddd" />
  </Icon>,
];

function Canvas() {
  return (
    <main className="relative min-w-0 flex-1 overflow-hidden bg-[#333]">
      <Model />
      <button
        aria-label="Collapse feature list"
        className="absolute top-[560px] left-0 flex h-[52px] w-12 items-center justify-center border border-l-0 border-[#aaa]"
      >
        <Icon className="size-7">
          <path d="M0 1l4 4 4-4M4 8v16" stroke="#fff" strokeWidth="2" />
          <path d="M10 2h14M7 9h17M7 16h17M7 23h17" stroke="#ddd" strokeWidth="1.500" />
        </Icon>
      </button>
      <ViewCube />
      <div className="absolute top-[403px] right-0 flex w-6 flex-col gap-[14px] overflow-hidden">
        <div className="border-t border-l border-[#aaa]">
          {SIDE_TOOLS.map((icon, i) => (
            <button key={i} aria-label={`Table ${i + 1}`} className="flex h-[50px] w-16 items-center border-b border-[#aaa] pl-[10px]">{icon}</button>
          ))}
        </div>
        <div className="border-t border-l border-[#aaa]">
          {APP_TOOLS.map((icon, i) => (
            <button key={i} aria-label={`App ${i + 1}`} className="flex h-[50px] w-16 items-center border-b border-[#aaa] pl-[6px]">
              <span className="flex size-9 items-center rounded bg-[#666] pl-1">{icon}</span>
            </button>
          ))}
        </div>
      </div>
      <div className="absolute right-[-12px] bottom-[6px] flex items-end gap-[26px]">
        <button aria-label="Measure">
          <Icon>
            <path d="M1 11v7M1 12h16c4 0 6-1 6-3M1 20h16c3 0 6-1 6-4V6M1 12v8M5 19v-3M8 19v-3M11 19v-3M14 19v-3M17 19v-3" stroke="#fff" strokeWidth="1.600" />
            <ellipse cx="16" cy="6" rx="7.500" ry="4.500" stroke="#fff" strokeWidth="1.600" />
            <ellipse cx="16" cy="6" rx="3" ry="1.600" stroke="#fff" strokeWidth="1.600" />
          </Icon>
        </button>
        <button aria-label="Angle">
          <Icon className="size-[30px]">
            <path d="M1 18C1-1 23-1 23 18v2H1zM5 17c0-11 14-11 14 0M5 17h5c1-2 3-2 4 0h5" stroke="#fff" strokeWidth="1.600" />
            <path d="M3.500 17C3 2 21 2 20.500 17" stroke="#fff" strokeWidth="2" strokeDasharray="1 1.200" />
          </Icon>
        </button>
        <button aria-label="Mass properties">
          <Icon className="size-7">
            <path d="M1 3h22M12 2v20M1 22h22M4 4L1 16h7L5 4M19 4l-3 12h7L20 4" stroke="#fff" strokeWidth="2" />
            <path d="M1 16h7v2H1zM16 16h7v2h-7z" fill="#fff" />
          </Icon>
        </button>
      </div>
    </main>
  );
}

function TabBar() {
  const [active, setActive] = useState(2);

  return (
    <footer className="flex h-11 shrink-0 bg-[#555] pb-[3px] text-[21px] leading-6 font-medium">
      <button aria-label="Add tab" className="flex w-[51px] shrink-0 items-center justify-center">
        <Icon className="size-[22px]">
          <path d="M12 0v24M0 12h24" stroke="#ccc" strokeWidth="4.500" />
        </Icon>
      </button>
      <div className="flex w-[257px] shrink-0 items-center bg-[#333] [clip-path:polygon(0_0,246px_0,257px_50%,246px_100%,0_100%)]">
        <svg viewBox="0 0 66 41" className="h-full w-[66px] shrink-0" aria-label="Home" role="img">
          <path d="M0 0h52l12 20.500L52 41H0z" fill="#1b1b1b" />
          <path d="M52 0l12 20.500L52 41" fill="none" stroke="#555" strokeWidth="2" />
          <path d="M12 20L26 5l6 6V6h4v9l5 5v12H29V23h-6v9H13V20z" fill="#999" />
        </svg>
        <a href="#folder" className="ml-[18px] whitespace-nowrap text-[20px] text-[#bbb]">Advanced Threa</a>
      </div>
      <div role="tablist" className="ml-[3px] flex gap-[3px]">
        {TABS.map((tab, i) => (
          <button
            key={i}
            role="tab"
            aria-selected={i === active}
            onClick={() => setActive(i)}
            className={`flex w-[300px] items-center gap-[6px] rounded-b-lg pl-[18px] whitespace-nowrap ${
              i === active ? '-mb-[3px] border-b-[3px] border-[#8ec7f0] bg-[#333] text-white' : 'bg-[#1b1b1b] text-[#ccc]'
            }`}
          >
            {tab.kind === 'studio' ? (
              <Icon>
                <path d="M1 9l3-3 6 2v16H4l-3-3zM13 3l3-3 7 3v21h-6l-4-3z" fill="#fff" />
                <path d="M1 8l4 2v14M5 10h5M13 3l4 1v20M17 4h6" stroke="#555" />
              </Icon>
            ) : (
              <Icon>
                <path d="M0 0h20l4 4v20H6l-6-5z" fill="#fff" />
                <path d="M0 1h14l5 5v11H6l-6-4zM0 1l6 5h13M6 6v11" fill="#999" stroke="#333" />
              </Icon>
            )}
            {tab.name}
          </button>
        ))}
      </div>
    </footer>
  );
}

export default function App() {
  return (
    <div className="relative flex h-screen flex-col overflow-hidden bg-[#333] font-[Roboto,sans-serif]">
      <Header />
      <div className="flex min-h-0 flex-1">
        <Rail />
        <div className="flex min-w-0 flex-1 flex-col">
          <Toolbar />
          <div className="flex min-h-0 flex-1">
            <FeatureTree />
            <Canvas />
          </div>
          <TabBar />
        </div>
      </div>
      {/* dashed outline along the right and bottom edges */}
      <span className="pointer-events-none absolute inset-y-0 right-0 w-px bg-[repeating-linear-gradient(180deg,#888_0_12px,transparent_12px_20px)]" />
      <span className="pointer-events-none absolute inset-x-0 bottom-0 h-px bg-[repeating-linear-gradient(90deg,#888_0_8px,transparent_8px_20px)]" />
    </div>
  );
}
